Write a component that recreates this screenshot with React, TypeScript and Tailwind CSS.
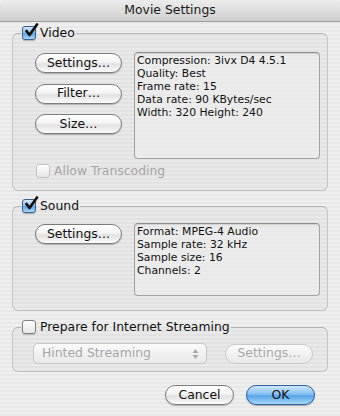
import React from 'react';

const font = { fontFamily: '"Lucida Grande", "DejaVu Sans", sans-serif' };

function CheckBox({ checked, disabled }: { checked?: boolean; disabled?: boolean }) {
  if (checked) {
    return (
      <span className="relative flex h-[14px] w-[14px] items-center justify-center rounded-[3px] border border-[#3a5f8e] bg-[linear-gradient(180deg,#d6ebfb_0%,#8ec3ef_45%,#5ea7e6_55%,#a8d8fb_100%)] shadow-[0_1px_1px_rgba(0,0,0,0.25)]">
        <svg width="15" height="15" viewBox="0 0 15 15" className="absolute -top-[4px] left-[1px]">
          <path d="M2.5 8 L5.5 12 L13 1.5" fill="none" stroke="#111" strokeWidth="2.7" strokeLinecap="round" strokeLinejoin="round" />
        </svg>
      </span>
    );
  }
  return (
    <span
      className={`flex h-[14px] w-[14px] rounded-[3px] border bg-[linear-gradient(180deg,#ffffff_0%,#f2f2f2_50%,#e6e6e6_100%)] ${
        disabled ? 'border-[#c4c4c4]' : 'border-[#808080] shadow-[0_1px_1px_rgba(0,0,0,0.2)]'
      }`}
    />
  );
}

function AquaButton({ label, width, disabled }: { label: string; width: string; disabled?: boolean }) {
  return (
    <div
      className={`flex h-[20px] items-center justify-center rounded-full border text-[12.4px] ${width} ${
        disabled
          ? 'border-[#c9c9c9] bg-[linear-gradient(180deg,#fbfbfb_0%,#f1f1f1_50%,#e9e9e9_100%)] text-[#a9a9a9]'
          : 'border-[#7c7c7c] bg-[linear-gradient(180deg,#ffffff_0%,#f4f4f4_45%,#e2e2e2_55%,#fbfbfb_100%)] text-[#111] shadow-[0_1px_1px_rgba(0,0,0,0.25)]'
      }`}
    >
      {label}
    </div>
  );
}

function InfoBox({ lines, height }: { lines: string[]; height: string }) {
  return (
    <div
      className={`flex flex-1 flex-col rounded-[4px] border border-[#a3a3a3] border-t-[#8d8d8d] bg-[#efefef]/60 px-[2px] pt-[1px] text-[10.8px] leading-[13px] text-[#111] shadow-[inset_0_1px_1px_rgba(0,0,0,0.12)] ${height}`}
    >
      {lines.map((l) => (
        <span key={l}>{l}</span>
      ))}
    </div>
  );
}

function Legend({ label, checked }: { label: string; checked?: boolean }) {
  return (
    <legend className="ml-[8px] flex h-[16px] items-center gap-[4px] pl-[1px] pr-[1px] text-[12.4px] text-[#111]">
      <CheckBox checked={checked} />
      <span>{label}</span>
    </legend>
  );
}

const groupCls =
  'rounded-[6px] border border-[#c2c2c2] border-t-[#b4b4b4] bg-[rgba(0,0,0,0.025)]';

export default function App() {
  return (
    <div
      style={font}
      className="flex h-[416px] w-[340px] flex-col overflow-hidden bg-[repeating-linear-gradient(180deg,#efefef_0px,#efefef_2px,#e8e8e8_2px,#e8e8e8_4px)]"
    >
      <div className="flex h-[22px] items-center justify-center rounded-t-[5px] border-b border-[#9e9e9e] bg-[linear-gradient(180deg,#ececec_0%,#dedede_50%,#cdcdcd_100%)] text-[12.4px] text-[#1a1a1a]">
        Movie Settings
      </div>

      <div className="flex flex-col pl-[12px] pr-[12px]">
        <fieldset className={`mt-[3px] ${groupCls}`}>
          <Legend label="Video" checked />
          <div className="flex flex-col pl-[22px] pr-[7px] pt-[11px] pb-[12px]">
            <div className="flex gap-[12px]">
              <div className="mt-[1px] flex flex-col gap-[10.5px]">
                <AquaButton label="Settings…" width="w-[87px]" />
                <AquaButton label="Filter…" width="w-[87px]" />
                <AquaButton label="Size…" width="w-[87px]" />
              </div>
              <InfoBox
                height="h-[107px]"
                lines={[
                  'Compression: 3ivx D4 4.5.1',
                  'Quality: Best',
                  'Frame rate: 15',
                  'Data rate: 90 KBytes/sec',
                  'Width: 320 Height: 240',
                ]}
              />
            </div>
            <div className="ml-[1px] mt-[5px] flex h-[14px] items-center gap-[4px] text-[12.4px] text-[#a6a6a6]">
              <CheckBox disabled />
              <span>Allow Transcoding</span>
            </div>
          </div>
        </fieldset>

        <fieldset className={`mt-[7px] ${groupCls}`}>
          <Legend label="Sound" checked />
          <div className="flex gap-[12px] pl-[22px] pr-[7px] pt-[9px] pb-[14px]">
            <div className="mt-[1px]">
              <AquaButton label="Settings…" width="w-[87px]" />
            </div>
            <InfoBox
              height="h-[73px]"
              lines={['Format: MPEG-4 Audio', 'Sample rate: 32 kHz', 'Sample size: 16', 'Channels: 2']}
            />
          </div>
        </fieldset>

        <fieldset className={`mt-[8px] ${groupCls}`}>
          <Legend label="Prepare for Internet Streaming" />
          <div className="flex items-center gap-[18px] pl-[20px] pt-[8px] pb-[7px]">
            <div className="flex h-[21px] w-[174px] items-center justify-between rounded-[5px] border border-[#c6c6c6] bg-[linear-gradient(180deg,#fbfbfb_0%,#f1f1f1_50%,#e9e9e9_100%)] pl-[8px] pr-[7px] text-[12.4px] text-[#a6a6a6]">
              <span>Hinted Streaming</span>
              <svg width="7" height="12" viewBox="0 0 7 12">
                <path d="M3.5 1 L6.5 5 L0.5 5 Z" fill="#a9a9a9" />
                <path d="M3.5 11 L6.5 7 L0.5 7 Z" fill="#a9a9a9" />
              </svg>
            </div>
            <AquaButton label="Settings…" width="w-[88px]" disabled />
          </div>
        </fieldset>

        <div className="mt-[13px] flex justify-end gap-[12px] pr-[13px]">
          <AquaButton label="Cancel" width="w-[69px]" />
          <div className="flex h-[20px] w-[69px] items-center justify-center rounded-full border border-[#2f5f9c] bg-[linear-gradient(180deg,#cfe7fc_0%,#86c0f1_45%,#56a2e8_55%,#a6d9fb_100%)] text-[12.4px] text-[#111] shadow-[0_1px_1px_rgba(0,0,0,0.3)]">
            OK
          </div>
        </div>
      </div>
    </div>
  );
}
